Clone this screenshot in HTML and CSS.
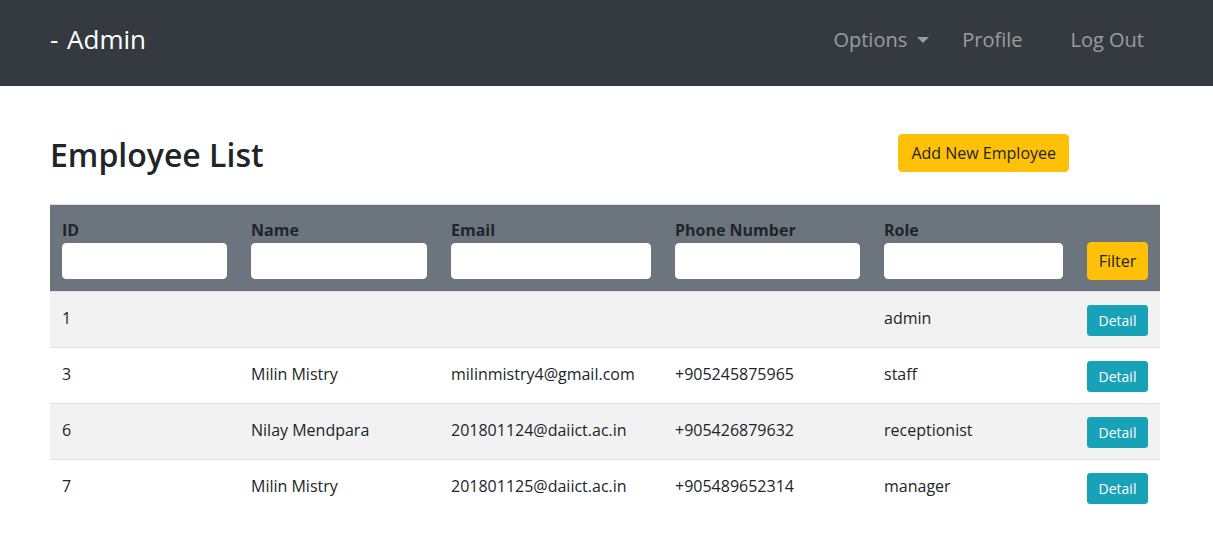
FILE: index.html
```html
<!DOCTYPE html>
<html lang="en">
<head>
<meta charset="utf-8">
<title>Employee List</title>
<link rel="stylesheet" href="styles.css">
</head>
<body>
<nav class="navbar">
  <a class="brand" href="#">- Admin</a>
  <ul class="nav">
    <li class="nav-item dropdown"><a href="#">Options</a><span class="caret"></span></li>
    <li class="nav-item profile"><a href="#">Profile</a></li>
    <li class="nav-item logout"><a href="#">Log Out</a></li>
  </ul>
</nav>
<main class="container">
  <div class="title-row">
    <h2 class="title">Employee List</h2>
    <button class="btn btn-warning add-btn">Add New Employee</button>
  </div>
  <table class="table">
    <colgroup>
      <col class="c1"><col class="c2"><col class="c3"><col class="c4"><col class="c5"><col class="c6">
    </colgroup>
    <thead>
      <tr>
        <th><label>ID</label><input type="text"></th>
        <th><label>Name</label><input type="text"></th>
        <th><label>Email</label><input type="text"></th>
        <th><label>Phone Number</label><input type="text"></th>
        <th><label>Role</label><input type="text"></th>
        <th class="filter-cell"><button class="btn btn-warning">Filter</button></th>
      </tr>
    </thead>
    <tbody>
      <tr class="odd"><td>1</td><td></td><td></td><td></td><td>admin</td><td><button class="btn btn-info btn-sm">Detail</button></td></tr>
      <tr><td>3</td><td>Milin Mistry</td><td>milinmistry4@gmail.com</td><td>+905245875965</td><td>staff</td><td><button class="btn btn-info btn-sm">Detail</button></td></tr>
      <tr class="odd"><td>6</td><td>Nilay Mendpara</td><td>201801124@daiict.ac.in</td><td>+905426879632</td><td>receptionist</td><td><button class="btn btn-info btn-sm">Detail</button></td></tr>
      <tr><td>7</td><td>Milin Mistry</td><td>201801125@daiict.ac.in</td><td>+905489652314</td><td>manager</td><td><button class="btn btn-info btn-sm">Detail</button></td></tr>
    </tbody>
  </table>
</main>
</body>
</html>
```
FILE: styles.css
```css
* { box-sizing: border-box; }
body {
  margin: 0;
  font-family: "Open Sans", "Noto Sans", "Liberation Sans", sans-serif;
  font-size: 16px;
  line-height: 1.5;
  color: #212529;
  background: #fff;
}
a { text-decoration: none; }
.navbar {
  height: 86px;
  background: #343a40;
  display: flex;
  align-items: center;
  padding: 0 50px;
}
.brand {
  color: #fff;
  font-size: 26px;
  line-height: 1;
  margin-top: -9px;
  word-spacing: 2px;
}
.nav {
  list-style: none;
  margin: -6px 0 0 auto;
  padding: 0;
  display: flex;
  align-items: center;
  font-size: 20px;
}
.nav-item a { color: rgba(255,255,255,.5); }
.dropdown { display: flex; align-items: center; }
.caret {
  display: inline-block;
  margin-left: 10px;
  border-top: 6px solid rgba(255,255,255,.5);
  border-left: 6px solid transparent;
  border-right: 6px solid transparent;
}
.profile { margin-left: 33px; }
.logout { margin-left: 48px; margin-right: 19px; }
.container {
  width: 1110px;
  margin-left: 50px;
}
.title-row {
  display: flex;
  align-items: flex-start;
  padding-top: 48px;
  padding-bottom: 32px;
}
.title {
  margin: 0;
  font-size: 32px;
  font-weight: 600;
  line-height: 1.2;
  flex: 1;
  padding-top: 2px;
  margin-bottom: -2px;
}
.btn {
  font-family: inherit;
  border: 1px solid transparent;
  border-radius: 4px;
  font-size: 16px;
  line-height: 1.5;
  padding: 6px 12px;
  cursor: pointer;
}
.btn-warning { background: #ffc107; border-color: #ffc107; color: #212529; }
.add-btn { margin-right: 91px; }
.btn-info { background: #17a2b8; border-color: #17a2b8; color: #fff; }
.btn-sm { font-size: 14px; padding: 4px 8px; line-height: 1.5; border-radius: 3px; width: 61px; }
.table {
  width: 100%;
  border-collapse: collapse;
  table-layout: fixed;
}
.c1 { width: 189px; }
.c2 { width: 200px; }
.c3 { width: 224px; }
.c4 { width: 209px; }
.c5 { width: 203px; }
.c6 { width: 85px; }
.table th, .table td {
  padding: 12px;
  border-top: 1px solid #dee2e6;
  vertical-align: top;
  text-align: left;
}
.table thead th {
  background: #6c757d;
  font-weight: 700;
  vertical-align: bottom;
  padding-top: 13px;
  padding-bottom: 12px;
}
.table th label { display: block; line-height: 24px; }
.table th input {
  display: block;
  width: 100%;
  height: 36px;
  border: 1px solid #fff;
  border-radius: 4px;
  background: #fff;
  margin-top: 1px;
}
.filter-cell .btn { margin-bottom: -1px; width: 61px; padding-left: 0; padding-right: 0; }
.table tbody tr.odd { background: #f2f2f2; }
.table td { height: 56px; padding-top: 14px; padding-bottom: 10px; }
.table td .btn-sm { margin-top: -1px; }
```
